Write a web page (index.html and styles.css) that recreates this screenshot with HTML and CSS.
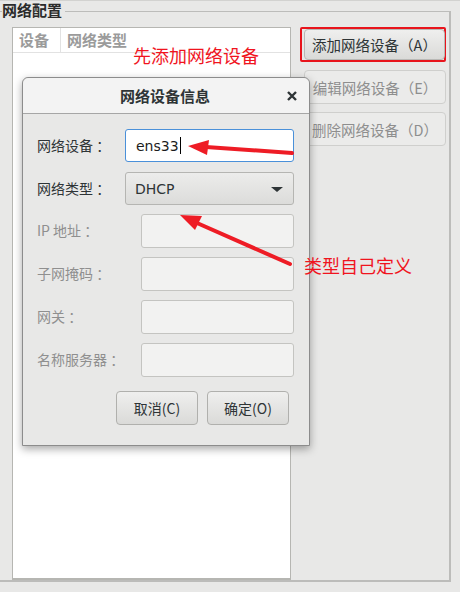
FILE: index.html
```html
<!DOCTYPE html>
<html lang="zh-CN">
<head>
<meta charset="utf-8">
<title>网络配置</title>
<link rel="stylesheet" href="styles.css">
</head>
<body>
<div class="page">
  <div class="frame">
    <div class="legend">网络配置</div>
    <div class="frame-body">
      <div class="list">
        <div class="list-head">
          <div class="col col-dev">设备</div>
          <div class="col col-type">网络类型</div>
        </div>
      </div>
      <div class="actions">
        <div class="highlight"><button class="btn">添加网络设备（A）</button></div>
        <button class="btn disabled">编辑网络设备（E）</button>
        <button class="btn disabled">删除网络设备（D）</button>
      </div>
    </div>
  </div>

  <div class="dialog">
    <div class="dlg-title">
      <span class="dlg-name">网络设备信息</span>
      <svg class="dlg-close" width="10" height="10" viewBox="0 0 10 10">
        <path d="M1 1 L9 9 M9 1 L1 9" stroke="#2e3436" stroke-width="2.4" stroke-linecap="butt"/>
      </svg>
    </div>
    <div class="dlg-body">
      <div class="row first">
        <span class="label">网络设备 ：</span>
        <div class="field entry focus"><span class="val">ens33</span><span class="caret"></span></div>
      </div>
      <div class="row">
        <span class="label">网络类型 ：</span>
        <div class="field combo"><span class="val">DHCP</span><span class="tri"></span></div>
      </div>
      <div class="row tall">
        <span class="label off">IP 地址 ：</span>
        <div class="field entry narrow off"></div>
      </div>
      <div class="row tall">
        <span class="label off">子网掩码 ：</span>
        <div class="field entry narrow off"></div>
      </div>
      <div class="row tall">
        <span class="label off">网关 ：</span>
        <div class="field entry narrow off"></div>
      </div>
      <div class="row tall">
        <span class="label off">名称服务器 ：</span>
        <div class="field entry narrow off"></div>
      </div>
      <div class="dlg-buttons">
        <button class="btn small">取消(C)</button>
        <button class="btn small">确定(O)</button>
      </div>
    </div>
  </div>

  <div class="note note-add">先添加网络设备</div>
  <div class="note note-type">类型自己定义</div>

  <svg class="arrows" width="460" height="592" viewBox="0 0 460 592">
    <line x1="292" y1="152" x2="206" y2="146" stroke="#ee1c25" stroke-width="4" stroke-linecap="round"/>
    <polygon points="188,145 209,139 207,154" fill="#ee1c25"/>
    <line x1="290" y1="263" x2="197" y2="222" stroke="#ee1c25" stroke-width="4" stroke-linecap="round"/>
    <polygon points="180,214 202,215 195,229" fill="#ee1c25"/>
  </svg>
</div>
</body>
</html>
```

FILE: styles.css
```css
* { box-sizing: border-box; }

html, body {
  margin: 0;
  padding: 0;
  background: #e8e8e7;
}

body {
  font-family: "DejaVu Sans", "Noto Sans CJK SC", sans-serif;
  font-size: 14px;
  color: #2e3436;
}

.page {
  position: relative;
  width: 460px;
  height: 592px;
  overflow: hidden;
  border-top: 1px solid #d2d2d0;
}

.frame {
  position: relative;
  margin-top: 10px;
  margin-left: -2px;
  width: 453px;
  height: 571px;
  border-top: 1px solid #bcbcba;
  border-left: 2px solid #bcbcba;
  border-right: 2px solid #bcbcba;
  border-bottom: 2px solid #bcbcba;
}

.legend {
  position: absolute;
  top: -12px;
  left: 2px;
  padding-right: 3px;
  background: #e8e8e7;
  font-family: "Noto Sans CJK SC", sans-serif;
  font-weight: 700;
  font-size: 15px;
  line-height: 20px;
  color: #2b2b2b;
}

.frame-body {
  display: flex;
  align-items: flex-start;
  padding: 15px 0 0 12px;
  height: 100%;
}

.list {
  width: 279px;
  height: 553px;
  background: #fff;
  border: 1px solid #b6b6b2;
  border-bottom-width: 2px;
}

.list-head {
  display: flex;
  height: 25px;
  border-bottom: 1px solid #e2e2e2;
  font-family: "Noto Sans CJK SC", sans-serif;
  font-weight: 700;
  font-size: 15px;
  line-height: 23px;
  color: #9b9b9b;
}

.col { padding-left: 6px; }
.col-dev { width: 48px; border-right: 1px solid #e2e2e2; }
.col-type { padding-left: 6px; }

.actions {
  display: flex;
  flex-direction: column;
  gap: 8px;
  margin-left: 13px;
  width: 143px;
}

.highlight {
  margin-left: -4px;
  width: 146px;
  height: 35px;
  border: 2px solid #e8141c;
  border-radius: 2px;
  padding: 0 0 0 2px;
}

.btn {
  display: block;
  width: 142px;
  height: 34px;
  padding: 0;
  border: 1px solid #b0b0ad;
  border-radius: 4px;
  background: linear-gradient(#efefee, #dadad8);
  font-family: "Noto Sans CJK SC", sans-serif;
  font-size: 14.5px;
  color: #2e3436;
  text-align: center;
}

.highlight .btn {
  width: 141px;
  height: 31px;
  border-color: #b8b8b5;
}

.btn.disabled {
  background: #ebebea;
  border-color: #cfcfcd;
  color: #8e8e8e;
}

.dialog {
  position: absolute;
  left: 22px;
  top: 76px;
  width: 288px;
  height: 369px;
  background: #e8e8e7;
  border: 1px solid #8c8c8c;
  border-radius: 6px 6px 0 0;
  box-shadow: 0 3px 8px rgba(0, 0, 0, 0.35);
}

.dlg-title {
  display: flex;
  align-items: center;
  justify-content: center;
  position: relative;
  height: 36px;
  background: #f3f3f3;
  border-bottom: 1px solid #a6a6a6;
  border-radius: 6px 6px 0 0;
}

.dlg-name {
  font-family: "Noto Sans CJK SC", sans-serif;
  font-weight: 700;
  font-size: 15px;
  color: #2e3436;
  margin-left: -2px;
}

.dlg-close {
  position: absolute;
  right: 12px;
  top: 13px;
}

.dlg-body {
  display: flex;
  flex-direction: column;
  gap: 9px;
  padding: 15px 15px 0 14px;
}

.row {
  display: flex;
  align-items: center;
  justify-content: space-between;
  height: 33px;
}
.row.first { margin-bottom: 1px; }
.row.tall { height: 34px; }

.label {
  font-family: "Noto Sans CJK SC", sans-serif;
  font-size: 14px;
  color: #2e3436;
  margin-top: -2px;
}
.label.off { color: #8f8f8f; }

.field {
  position: relative;
  display: flex;
  align-items: center;
  width: 169px;
  height: 100%;
  border-radius: 3px;
}

.field.narrow { width: 153px; }

.entry {
  background: #fff;
  border: 1px solid #b8b8b5;
}
.entry.focus {
  border-color: #4a90d9;
  padding-left: 10px;
}
.entry.off {
  background: #f2f2f1;
  border-color: #c4c4c1;
}

.val {
  font-family: "DejaVu Sans", sans-serif;
  font-size: 14px;
  color: #1c1c1c;
}

.caret {
  display: inline-block;
  width: 1px;
  height: 17px;
  margin-left: 1px;
  background: #000;
}

.combo {
  background: linear-gradient(#ececeb, #dcdcda);
  border: 1px solid #b5b5b2;
  padding-left: 9px;
}
.combo .val { color: #2e3436; }

.tri {
  position: absolute;
  right: 10px;
  top: 14px;
  width: 0;
  height: 0;
  border-left: 6px solid transparent;
  border-right: 6px solid transparent;
  border-top: 5px solid #2e3436;
}

.dlg-buttons {
  display: flex;
  justify-content: flex-end;
  gap: 9px;
  margin-top: 5px;
  padding-right: 5px;
}

.btn.small {
  width: 82px;
  height: 34px;
  font-size: 14px;
}

.note {
  position: absolute;
  font-family: "Noto Sans CJK SC", sans-serif;
  font-size: 18px;
  line-height: 20px;
  color: #f0141e;
}
.note-add { left: 133px; top: 44px; }
.note-type { left: 304px; top: 254px; }

.arrows {
  position: absolute;
  left: 0;
  top: 0;
  pointer-events: none;
}
```
